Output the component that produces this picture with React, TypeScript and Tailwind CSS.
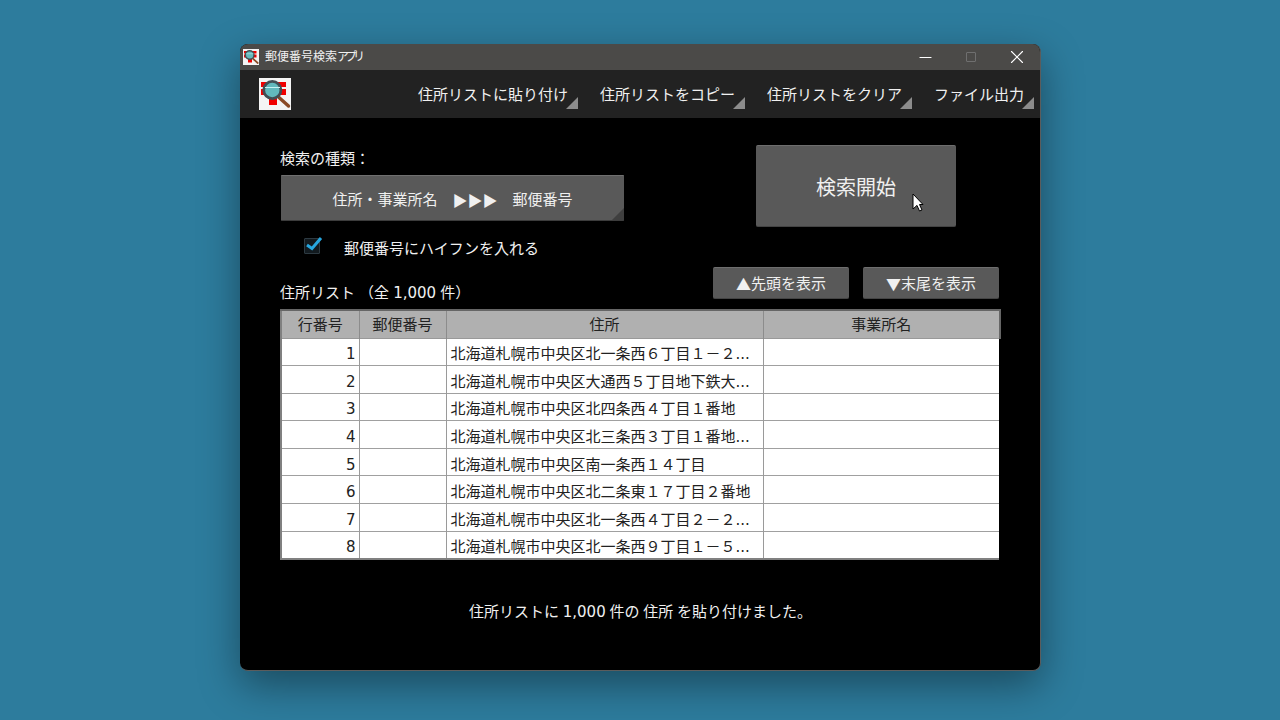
import { Minus, X } from "lucide-react";

const ROWS = [
  { no: 1, address: "北海道札幌市中央区北一条西６丁目１－２..." },
  { no: 2, address: "北海道札幌市中央区大通西５丁目地下鉄大..." },
  { no: 3, address: "北海道札幌市中央区北四条西４丁目１番地" },
  { no: 4, address: "北海道札幌市中央区北三条西３丁目１番地..." },
  { no: 5, address: "北海道札幌市中央区南一条西１４丁目" },
  { no: 6, address: "北海道札幌市中央区北二条東１７丁目２番地" },
  { no: 7, address: "北海道札幌市中央区北一条西４丁目２－２..." },
  { no: 8, address: "北海道札幌市中央区北一条西９丁目１－５..." },
];

const MENU = [
  { label: "住所リストに貼り付け", width: "w-[167px]" },
  { label: "住所リストをコピー", width: "w-[167px]" },
  { label: "住所リストをクリア", width: "w-[167px]" },
  { label: "ファイル出力", width: "w-[122px]" },
];

function AppIcon({ className }: { className: string }) {
  return (
    <svg viewBox="0 0 32 32" className={className}>
      <rect width="32" height="32" fill="#f4f4f4" />
      <path d="M2 4h25v5H2zM2 11h25v6H2zM10 16h8v11h-8z" fill="#f00000" />
      <path d="M20 19.5l9.5 8.5" stroke="#8a4a26" strokeWidth="3.4" strokeLinecap="round" />
      <circle cx="13.3" cy="12" r="8.6" fill="#62b9bd" stroke="#434e54" strokeWidth="2.8" />
      <path d="M6 9.5h15" stroke="#c8f2f2" strokeWidth="1" />
    </svg>
  );
}

function Corner({ fill }: { fill: string }) {
  return (
    <svg viewBox="0 0 12 12" className="absolute right-0 bottom-0 h-3 w-3">
      <path d="M12 0v12H0z" fill={fill} />
    </svg>
  );
}

function SmallButton({ arrow, children }: { arrow: string; children: string }) {
  return (
    <button className="flex h-8 w-[136px] items-center justify-center rounded-[2px] border-t border-t-[#6e6e6e] border-b border-b-[#444] bg-[#595959] pt-[2px] text-[15px] text-[#f0f0f0]">
      <span className="font-['Noto_Sans_CJK_JP']">{arrow}</span>
      {children}
    </button>
  );
}

export default function App() {
  return (
    <div className="flex h-screen w-full items-start justify-start overflow-hidden bg-[#2d7c9d] pt-[44px] pl-[240px] font-['DejaVu_Sans','Noto_Sans_CJK_JP',sans-serif]">
      <div className="flex h-[627px] w-[801px] flex-col overflow-hidden rounded-lg border-r border-b border-[#5c5c5c] bg-black shadow-[0_14px_40px_rgba(0,0,0,0.4)]">
        {/* title bar */}
        <div className="flex h-[26px] shrink-0 items-center bg-[#4b4a48] pl-[3px]">
          <AppIcon className="h-4 w-4" />
          <span className="ml-[6px] text-[12px] leading-none text-[#f0f0f0]">
            郵便番号検索<span className="tracking-[-4px]">アプリ</span>
          </span>
          <div className="ml-auto flex items-center">
            <div className="flex h-[26px] w-[46px] items-center justify-center text-white">
              <Minus size={19} strokeWidth={1.4} />
            </div>
            <div className="flex h-[26px] w-[46px] items-center justify-center">
              <div className="h-[10px] w-[10px] rounded-[1px] border border-[#6f6f6f]" />
            </div>
            <div className="flex h-[26px] w-[46px] items-center justify-center text-white">
              <X size={22} strokeWidth={1.2} />
            </div>
          </div>
        </div>

        {/* toolbar */}
        <div className="flex h-[48px] shrink-0 items-center bg-[#222222] pl-[19px]">
          <AppIcon className="h-8 w-8" />
          <div className="ml-auto flex h-full items-center pr-[6px]">
            {MENU.map((item) => (
              <div key={item.label} className={`relative flex h-full items-center justify-end pt-[3px] pr-[10px] text-[15px] whitespace-nowrap text-[#f0f0f0] ${item.width}`}>
                {item.label}
                <svg viewBox="0 0 12 12" className="absolute right-0 bottom-[9px] h-3 w-3">
                  <path d="M12 0v12H0z" fill="#8c8c8c" />
                </svg>
              </div>
            ))}
          </div>
        </div>

        {/* content */}
        <div className="flex flex-1 flex-col pr-[39px] pl-[40px] text-[#f0f0f0]">
          <div className="flex items-start justify-between pt-[27px] pr-[45px]">
            <div className="w-[345px]">
              <div className="h-[30px] pt-px text-[15px] leading-[26px]">検索の種類：</div>
              <button className="relative ml-px flex h-[46px] w-[343px] items-center justify-center rounded-[1px] border-t border-t-[#707070] border-b border-b-[#3c3c3c] bg-[#595959] pt-[4px] text-[15px]">
                <span>住所・事業所名</span>
                <span className="mx-[15px] font-['Noto_Sans_CJK_JP']">▶▶▶</span>
                <span>郵便番号</span>
                <Corner fill="#3f3f3f" />
              </button>
            </div>
            <button className="relative flex h-[82px] w-[200px] items-center justify-center rounded-[2px] border-t border-t-[#6e6e6e] border-b border-b-[#444] bg-[#595959] pt-[3px] text-[20px]">
              検索開始
              <svg viewBox="0 0 12 19" className="absolute top-[47px] left-[156px] h-[19px] w-3">
                <path d="M1 1v15l4-3.6 2.5 5.6 2.5-1-2.5-5.5H11z" fill="#fff" stroke="#000" strokeWidth="1" />
              </svg>
            </button>
          </div>

          <div className="mt-[9px] flex h-[25px] items-start pl-[24px]">
            <div className="relative mt-[2px] h-[16px] w-[16px] rounded-[1px] border border-[#2d3a42] bg-[#121a1f]">
              <svg viewBox="0 0 20 18" className="absolute -top-[2px] -left-px h-[18px] w-5">
                <path d="M3 8l5 3.5L17 1" fill="none" stroke="#27a7e0" strokeWidth="3" />
              </svg>
            </div>
            <span className="mt-[2px] ml-[24px] text-[15px] leading-[22px]">郵便番号にハイフンを入れる</span>
          </div>

          <div className="mt-[6px] flex items-start justify-between">
            <span className="mt-[15px] text-[15px] leading-[22px] [word-spacing:-0.7px]">住所リスト （全 1,000 件）</span>
            <div className="flex gap-[14px] pr-[2px]">
              <SmallButton arrow="▲">先頭を表示</SmallButton>
              <SmallButton arrow="▼">末尾を表示</SmallButton>
            </div>
          </div>

          <table className="mt-[5px] w-[721px] table-fixed border-collapse border-t-2 border-b-2 border-l-2 border-t-[#666] border-b-[#808080] border-l-[#808080] bg-white text-[15px] leading-[20px] text-[#222]">
            <colgroup>
              <col className="w-[78px]" />
              <col className="w-[87px]" />
              <col className="w-[317px]" />
              <col />
            </colgroup>
            <thead>
              <tr className="h-[28px] border-b border-b-[#999] bg-[#b0b0b0] text-center">
                <th className="border-r border-r-[#8c8c8c] pt-[2px] font-normal">行番号</th>
                <th className="border-r border-r-[#8c8c8c] pt-[2px] font-normal">郵便番号</th>
                <th className="border-r border-r-[#8c8c8c] pt-[2px] font-normal">住所</th>
                <th className="border-r-2 border-r-[#666] pt-[2px] font-normal">事業所名</th>
              </tr>
            </thead>
            <tbody>
              {ROWS.map((row) => (
                <tr key={row.no} className="h-[27.6px] border-b border-b-[#a0a0a0] last:border-b-0">
                  <td className="border-r border-r-[#9a9a9a] pt-[5px] pr-[3px] text-right">{row.no}</td>
                  <td className="border-r border-r-[#9a9a9a]" />
                  <td className="overflow-hidden border-r border-r-[#9a9a9a] pt-[5px] pl-[4px] whitespace-nowrap">{row.address}</td>
                  <td className="border-r-2 border-r-black" />
                </tr>
              ))}
            </tbody>
          </table>

          <div className="mt-[40px] pt-px text-center text-[15px] leading-[22px] [word-spacing:-1px]">住所リストに 1,000 件の 住所 を貼り付けました。</div>
        </div>
      </div>
    </div>
  );
}
